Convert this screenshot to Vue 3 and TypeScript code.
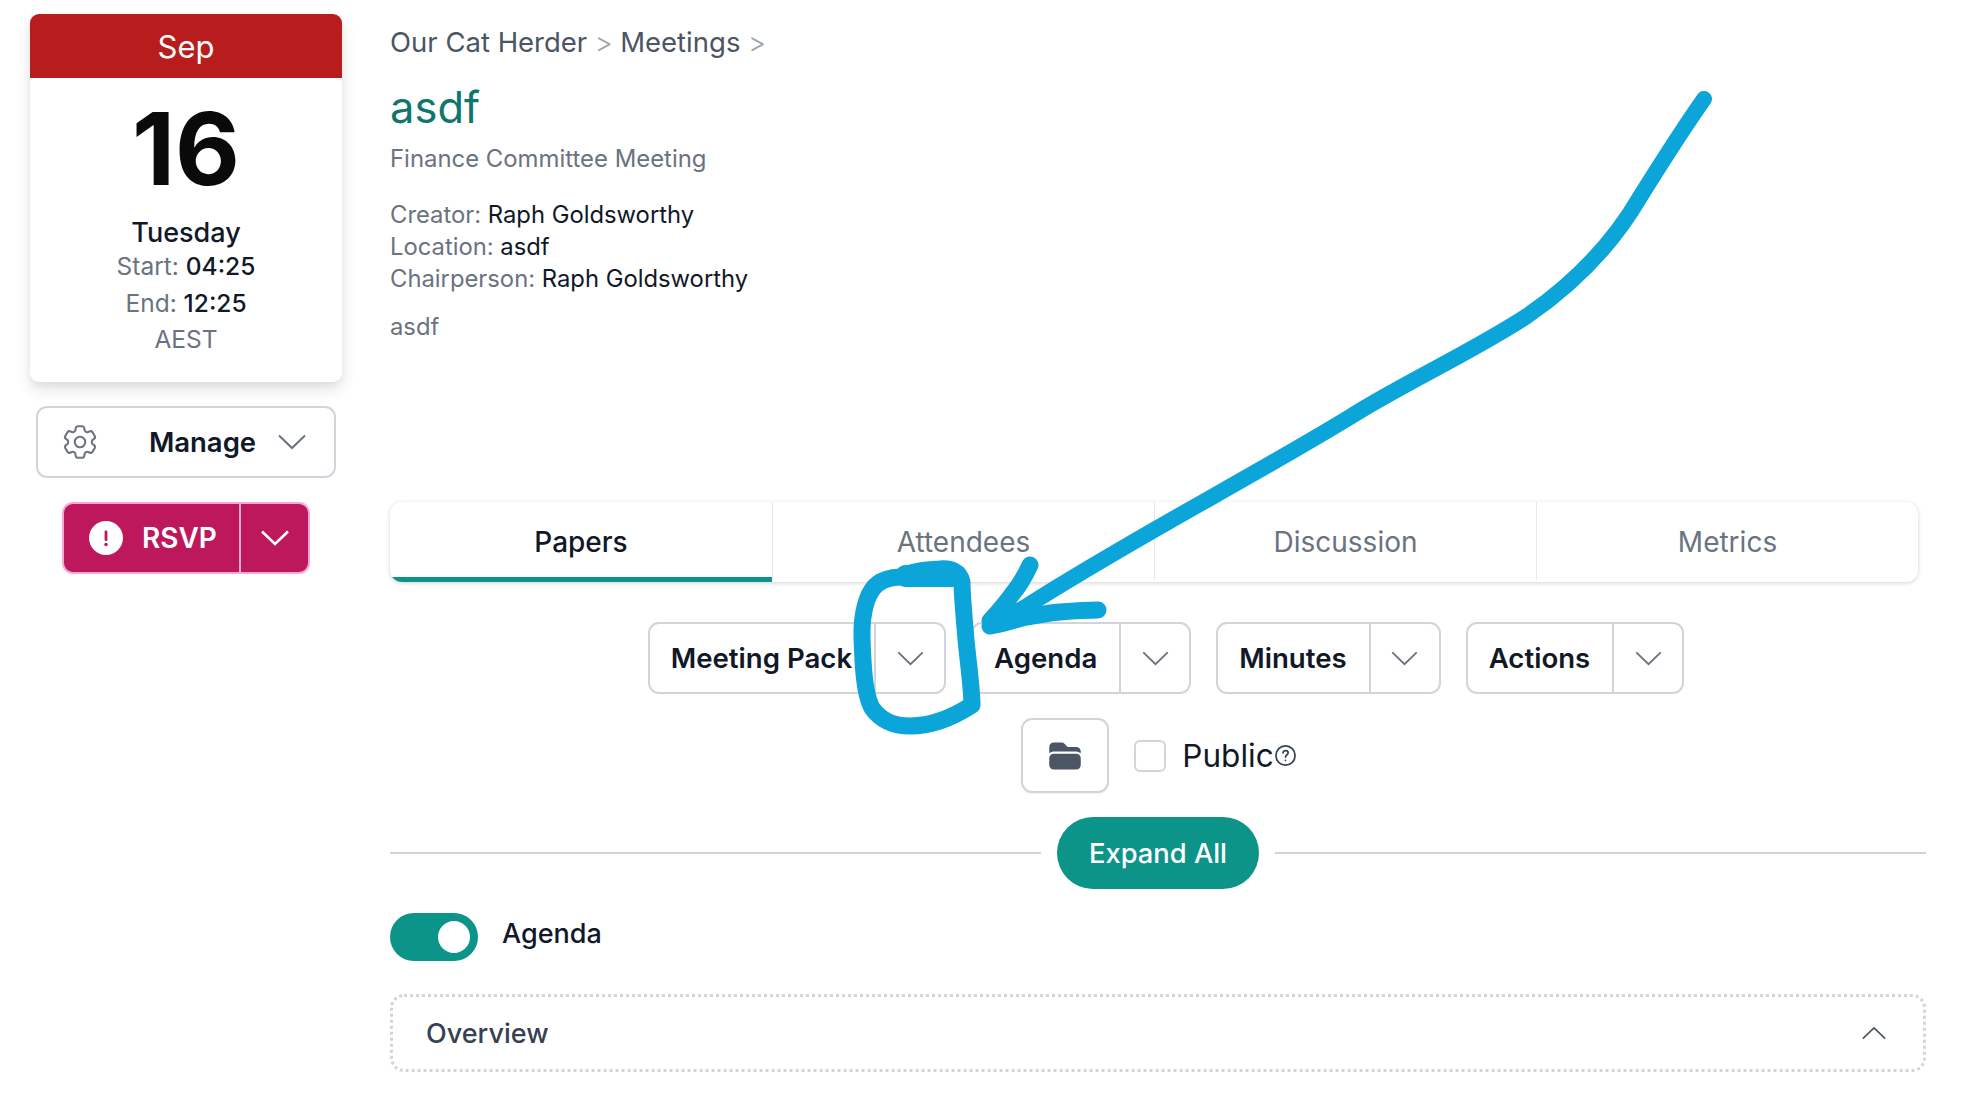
<script setup lang="ts">
const tabs = ["Papers", "Attendees", "Discussion", "Metrics"];
const packs = ["Meeting Pack", "Agenda", "Minutes", "Actions"];
const meta = [
  { label: "Creator:", value: "Raph Goldsworthy" },
  { label: "Location:", value: "asdf" },
  { label: "Chairperson:", value: "Raph Goldsworthy" },
];
</script>

<template>
  <div class="page">
    <aside class="side">
      <div class="calendar">
        <div class="month">Sep</div>
        <div class="day">16</div>
        <div class="weekday">Tuesday</div>
        <div class="time">Start: <b>04:25</b></div>
        <div class="time">End: <b>12:25</b></div>
        <div class="time">AEST</div>
      </div>

      <button class="manage" type="button">
        <svg class="gear" viewBox="0 0 24 24" fill="none" stroke="currentColor" stroke-width="1.2" stroke-linecap="round" stroke-linejoin="round">
          <path d="M9.594 3.94c.09-.542.56-.94 1.11-.94h2.593c.55 0 1.02.398 1.11.94l.213 1.281c.063.374.313.686.645.87.074.04.147.083.22.127.325.196.72.257 1.075.124l1.217-.456a1.125 1.125 0 0 1 1.37.49l1.296 2.247a1.125 1.125 0 0 1-.26 1.431l-1.003.827c-.293.241-.438.613-.43.992a7.723 7.723 0 0 1 0 .255c-.008.378.137.75.43.991l1.004.827c.424.35.534.955.26 1.43l-1.298 2.247a1.125 1.125 0 0 1-1.369.491l-1.217-.456c-.355-.133-.75-.072-1.076.124a6.47 6.47 0 0 1-.22.128c-.331.183-.581.495-.644.869l-.213 1.281c-.09.543-.56.94-1.11.94h-2.594c-.55 0-1.019-.398-1.11-.94l-.213-1.281c-.062-.374-.312-.686-.644-.87a6.52 6.52 0 0 1-.22-.127c-.325-.196-.72-.257-1.076-.124l-1.217.456a1.125 1.125 0 0 1-1.369-.49l-1.297-2.247a1.125 1.125 0 0 1 .26-1.431l1.004-.827c.292-.24.437-.613.43-.991a6.932 6.932 0 0 1 0-.255c.007-.38-.138-.751-.43-.992l-1.004-.827a1.125 1.125 0 0 1-.26-1.43l1.297-2.247a1.125 1.125 0 0 1 1.37-.491l1.216.456c.356.133.751.072 1.076-.124.072-.044.146-.086.22-.128.332-.183.582-.495.644-.869l.214-1.28Z" />
          <path d="M15 12a3 3 0 1 1-6 0 3 3 0 0 1 6 0Z" />
        </svg>
        <span class="manage-label">Manage</span>
        <svg class="chev chev--manage" viewBox="0 0 28 16" fill="none" stroke="currentColor" stroke-width="2"><path d="M1 1.5 14 14 27 1.5" /></svg>
      </button>

      <div class="rsvp">
        <button class="rsvp-main" type="button">
          <svg class="alert" viewBox="0 0 34 34">
            <circle cx="17" cy="17" r="17" fill="#fff" />
            <rect x="15.6" y="9.5" width="2.8" height="10.5" rx="1.2" fill="#be185d" />
            <circle cx="17" cy="23.5" r="1.7" fill="#be185d" />
          </svg>
          RSVP
        </button>
        <button class="rsvp-more" type="button" aria-label="More">
          <svg class="chev chev--rsvp" viewBox="0 0 28 16" fill="none" stroke="currentColor" stroke-width="2.6"><path d="M1 1.5 14 14 27 1.5" /></svg>
        </button>
      </div>
    </aside>

    <main class="main">
      <div class="crumbs">
        <a>Our Cat Herder</a><span class="sep">&gt;</span><a>Meetings</a><span class="sep">&gt;</span>
      </div>
      <h1 class="title">asdf</h1>
      <div class="type">Finance Committee Meeting</div>
      <div class="meta">
        <div v-for="row in meta" :key="row.label" class="meta-row">
          {{ row.label }} <span>{{ row.value }}</span>
        </div>
      </div>
      <p class="desc">asdf</p>

      <nav class="tabs">
        <button
          v-for="(tab, i) in tabs"
          :key="tab"
          class="tab"
          :class="{ 'tab--active': i === 0 }"
          type="button"
        >
          {{ tab }}
        </button>
      </nav>

      <div class="packs">
        <div v-for="pack in packs" :key="pack" class="pack">
          <button class="pack-main" type="button">{{ pack }}</button>
          <button class="pack-more" type="button" :aria-label="pack + ' options'">
            <svg class="chev chev--pack" viewBox="0 0 28 16" fill="none" stroke="currentColor" stroke-width="2"><path d="M1 1.5 14 14 27 1.5" /></svg>
          </button>
        </div>
      </div>

      <div class="files">
        <button class="folder" type="button" aria-label="Files">
          <svg viewBox="0 0 24 24" fill="#4b5563">
            <path d="M19.5 21a3 3 0 0 0 3-3v-4.5a3 3 0 0 0-3-3h-15a3 3 0 0 0-3 3V18a3 3 0 0 0 3 3h15ZM1.5 10.146V6a3 3 0 0 1 3-3h5.379a2.25 2.25 0 0 1 1.59.659l2.122 2.121c.14.141.331.22.53.22H19.5a3 3 0 0 1 3 3v1.146A4.483 4.483 0 0 0 19.5 9h-15a4.483 4.483 0 0 0-3 1.146Z" />
          </svg>
        </button>
        <span class="check"></span>
        <span class="public">Public</span>
        <svg class="help" viewBox="0 0 24 24" fill="none" stroke="currentColor" stroke-width="1.8" stroke-linecap="round" stroke-linejoin="round">
          <circle cx="12" cy="12" r="10" />
          <path d="M9.4 9.2c.5-2.9 5.2-2.9 5.4 0 .1 1.9-2.8 2.2-2.8 4.4M12 17.2h.01" />
        </svg>
      </div>

      <div class="divider">
        <span class="rule"></span>
        <button class="expand" type="button">Expand All</button>
        <span class="rule"></span>
      </div>

      <div class="toggle-row">
        <span class="toggle"><span class="knob"></span></span>
        <span class="toggle-label">Agenda</span>
      </div>

      <div class="section">
        <span>Overview</span>
        <svg class="chev chev--up" viewBox="0 0 28 16" fill="none" stroke="currentColor" stroke-width="2"><path d="M1 14.5 14 2 27 14.5" /></svg>
      </div>
    </main>

    <!-- hand drawn annotation on top of the screenshot -->
    <svg class="scribble" viewBox="0 0 1970 1094" fill="none" stroke="#0ba5d9" stroke-linecap="round" stroke-linejoin="round">
      <path stroke-width="16" d="M1704 99C1680 133 1660 165 1640 197C1612 245 1572 285 1527 316C1472 352 1400 385 1350 417C1250 478 1130 540 1027 606C1012 615 1002 620 990 623" />
      <path stroke-width="17" d="M1030 565C1024 578 1020 585 1013 593C1006 603 998 612 990 621" />
      <path stroke-width="17" d="M1098 610C1085 610 1072 611 1060 612C1048 613 1038 615 1027 617C1014 620 1002 624 990 626" />
      <path stroke-width="17" d="M900 577C880 578 872 586 867 600C860 620 862 640 863 660C864 680 866 697 872 708C882 722 895 726 910 726C935 726 955 716 972 705C972 690 968 660 966 640C964 615 962 595 962 582C960 571 950 568 940 569C925 570 912 571 900 577Z" />
      <path stroke-width="22" d="M906 576H956" />
    </svg>
  </div>
</template>

<style scoped>
.page {
  position: relative;
  display: flex;
  align-items: flex-start;
  height: 1094px;
  overflow: hidden;
  background: #fff;
  font-family: Inter, "Liberation Sans", sans-serif;
  color: #111827;
}

button {
  font: inherit;
  background: none;
  border: 0;
  padding: 0;
  color: inherit;
}

.chev {
  display: block;
}

/* left column */
.side {
  display: flex;
  flex-direction: column;
  align-items: center;
  flex: none;
  width: 312px;
  margin: 14px 0 0 30px;
}

.calendar {
  width: 100%;
  height: 368px;
  border-radius: 9px;
  overflow: hidden;
  text-align: center;
  background: #fff;
  box-shadow: 0 8px 16px rgba(0, 0, 0, 0.1), 0 3px 7px rgba(0, 0, 0, 0.06);
}

.month {
  height: 64px;
  line-height: 66px;
  background: #b91c1c;
  color: #fff;
  font-size: 31px;
  font-weight: 400;
}

.day {
  margin-top: 12px;
  font-size: 100px;
  line-height: 118px;
  font-weight: 700;
  color: #0a0a0a;
}

.weekday {
  margin-top: 9px;
  font-size: 27px;
  line-height: 31px;
  font-weight: 500;
}

.time {
  font-size: 24.5px;
  line-height: 36.5px;
  color: #6b7280;
  font-weight: 400;
}

.time b {
  color: #111827;
  font-weight: 500;
}

.manage {
  display: flex;
  align-items: center;
  width: 300px;
  height: 72px;
  margin-top: 24px;
  padding: 0 28px 0 21px;
  border: 2px solid #d1d5db;
  border-radius: 11px;
  color: #111827;
  font-size: 27.5px;
  font-weight: 600;
}

.gear {
  flex: none;
  width: 42px;
  height: 42px;
  color: #6b7280;
}

.manage-label {
  flex: 1;
  text-align: center;
  padding-left: 26px;
}

.chev--manage {
  width: 28px;
  height: 16px;
  color: #6b7280;
}

.rsvp {
  display: flex;
  box-sizing: border-box;
  width: 248px;
  height: 72px;
  margin-top: 24px;
  border: 2px solid #f9a8d4;
  border-radius: 11px;
  overflow: hidden;
  background: #be185d;
  color: #fff;
  font-size: 28px;
  font-weight: 600;
}

.rsvp-main {
  display: flex;
  align-items: center;
  gap: 19px;
  width: 177px;
  padding-left: 25px;
  border-right: 2px solid #f9a8d4;
}

.alert {
  width: 34px;
  height: 34px;
}

.rsvp-more {
  display: flex;
  flex: 1;
  align-items: center;
  justify-content: center;
}

.chev--rsvp {
  width: 28px;
  height: 16px;
}

/* main column */
.main {
  flex: none;
  width: 1536px;
  margin-left: 48px;
}

.crumbs {
  margin-top: 21px;
  font-size: 27.5px;
  line-height: 42px;
  color: #4b5563;
}

.sep {
  margin: 0 7.5px;
  color: #9ca3af;
  font-weight: 300;
}

.title {
  margin: 16px 0 0;
  font-size: 43.5px;
  line-height: 56px;
  font-weight: 400;
  color: #0f766e;
}

.type {
  margin-top: 6px;
  font-size: 23.9px;
  line-height: 35px;
  color: #6b7280;
}

.meta {
  margin-top: 23px;
  font-size: 23.8px;
  line-height: 32px;
  color: #6b7280;
}

.meta-row span {
  color: #111827;
}

.desc {
  margin: 16px 0 0;
  font-size: 23.8px;
  line-height: 32px;
  color: #6b7280;
}

.tabs {
  display: grid;
  grid-template-columns: repeat(4, 1fr);
  width: 1528px;
  height: 80px;
  margin-top: 159px;
  border-radius: 12px;
  overflow: hidden;
  box-shadow: 0 1px 4px rgba(0, 0, 0, 0.18);
}

.tab {
  border-left: 1px solid #e5e7eb;
  border-bottom: 5px solid transparent;
  color: #6b7280;
  font-size: 28px;
  padding-top: 5px;
}

.tab:first-child {
  border-left: 0;
}

.tab--active {
  color: #111827;
  font-weight: 500;
  border-bottom-color: #0d9488;
}

.packs {
  display: flex;
  justify-content: center;
  gap: 25px;
  margin-top: 40px;
  padding-left: 16px;
}

.pack {
  display: flex;
  box-sizing: border-box;
  height: 72px;
  border: 2px solid #d1d5db;
  border-radius: 11px;
  font-size: 27.6px;
  font-weight: 600;
}

.pack-main {
  padding: 0 22px 0 21px;
  border-right: 2px solid #d1d5db;
}

.pack-more {
  display: flex;
  align-items: center;
  justify-content: center;
  width: 68px;
}

.chev--pack {
  width: 27px;
  height: 15px;
  color: #6b7280;
}

.files {
  display: flex;
  justify-content: center;
  align-items: center;
  margin-top: 24px;
  padding-left: 2px;
}

.folder {
  display: flex;
  align-items: center;
  justify-content: center;
  width: 88px;
  height: 75px;
  border: 2px solid #d1d5db;
  border-radius: 11px;
  box-shadow: 0 1px 2px rgba(0, 0, 0, 0.06);
}

.folder svg {
  width: 36px;
  height: 36px;
}

.check {
  box-sizing: border-box;
  width: 32px;
  height: 32px;
  margin-left: 25px;
  border: 2px solid #d1d5db;
  border-radius: 6px;
}

.public {
  margin-left: 16px;
  font-size: 31.5px;
  line-height: 44px;
}

.help {
  width: 23px;
  height: 23px;
  color: #374151;
}

.divider {
  display: flex;
  align-items: center;
  gap: 16px;
  margin-top: 24px;
}

.rule {
  flex: 1;
  height: 2px;
  background: #d1d5db;
}

.expand {
  width: 202px;
  height: 72px;
  border-radius: 36px;
  background: #0d9488;
  color: #fff;
  font-size: 27.3px;
  font-weight: 500;
}

.toggle-row {
  display: flex;
  align-items: center;
  margin-top: 24px;
}

.toggle {
  display: flex;
  align-items: center;
  justify-content: flex-end;
  width: 88px;
  height: 48px;
  padding-right: 8px;
  box-sizing: border-box;
  border-radius: 24px;
  background: #0d9488;
}

.knob {
  width: 32px;
  height: 32px;
  border-radius: 50%;
  background: #fff;
}

.toggle-label {
  margin: -7px 0 0 24px;
  font-size: 27px;
  font-weight: 500;
}

.section {
  display: flex;
  align-items: center;
  justify-content: space-between;
  height: 78px;
  box-sizing: border-box;
  margin-top: 33px;
  padding: 0 37px 0 33px;
  border: 3px dotted #d1d5db;
  border-radius: 14px;
  font-size: 27px;
  font-weight: 500;
  color: #374151;
}

.chev--up {
  width: 24px;
  height: 14px;
  color: #4b5563;
}

.scribble {
  position: absolute;
  left: 0;
  top: 0;
  width: 1970px;
  height: 1094px;
  pointer-events: none;
}
</style>
